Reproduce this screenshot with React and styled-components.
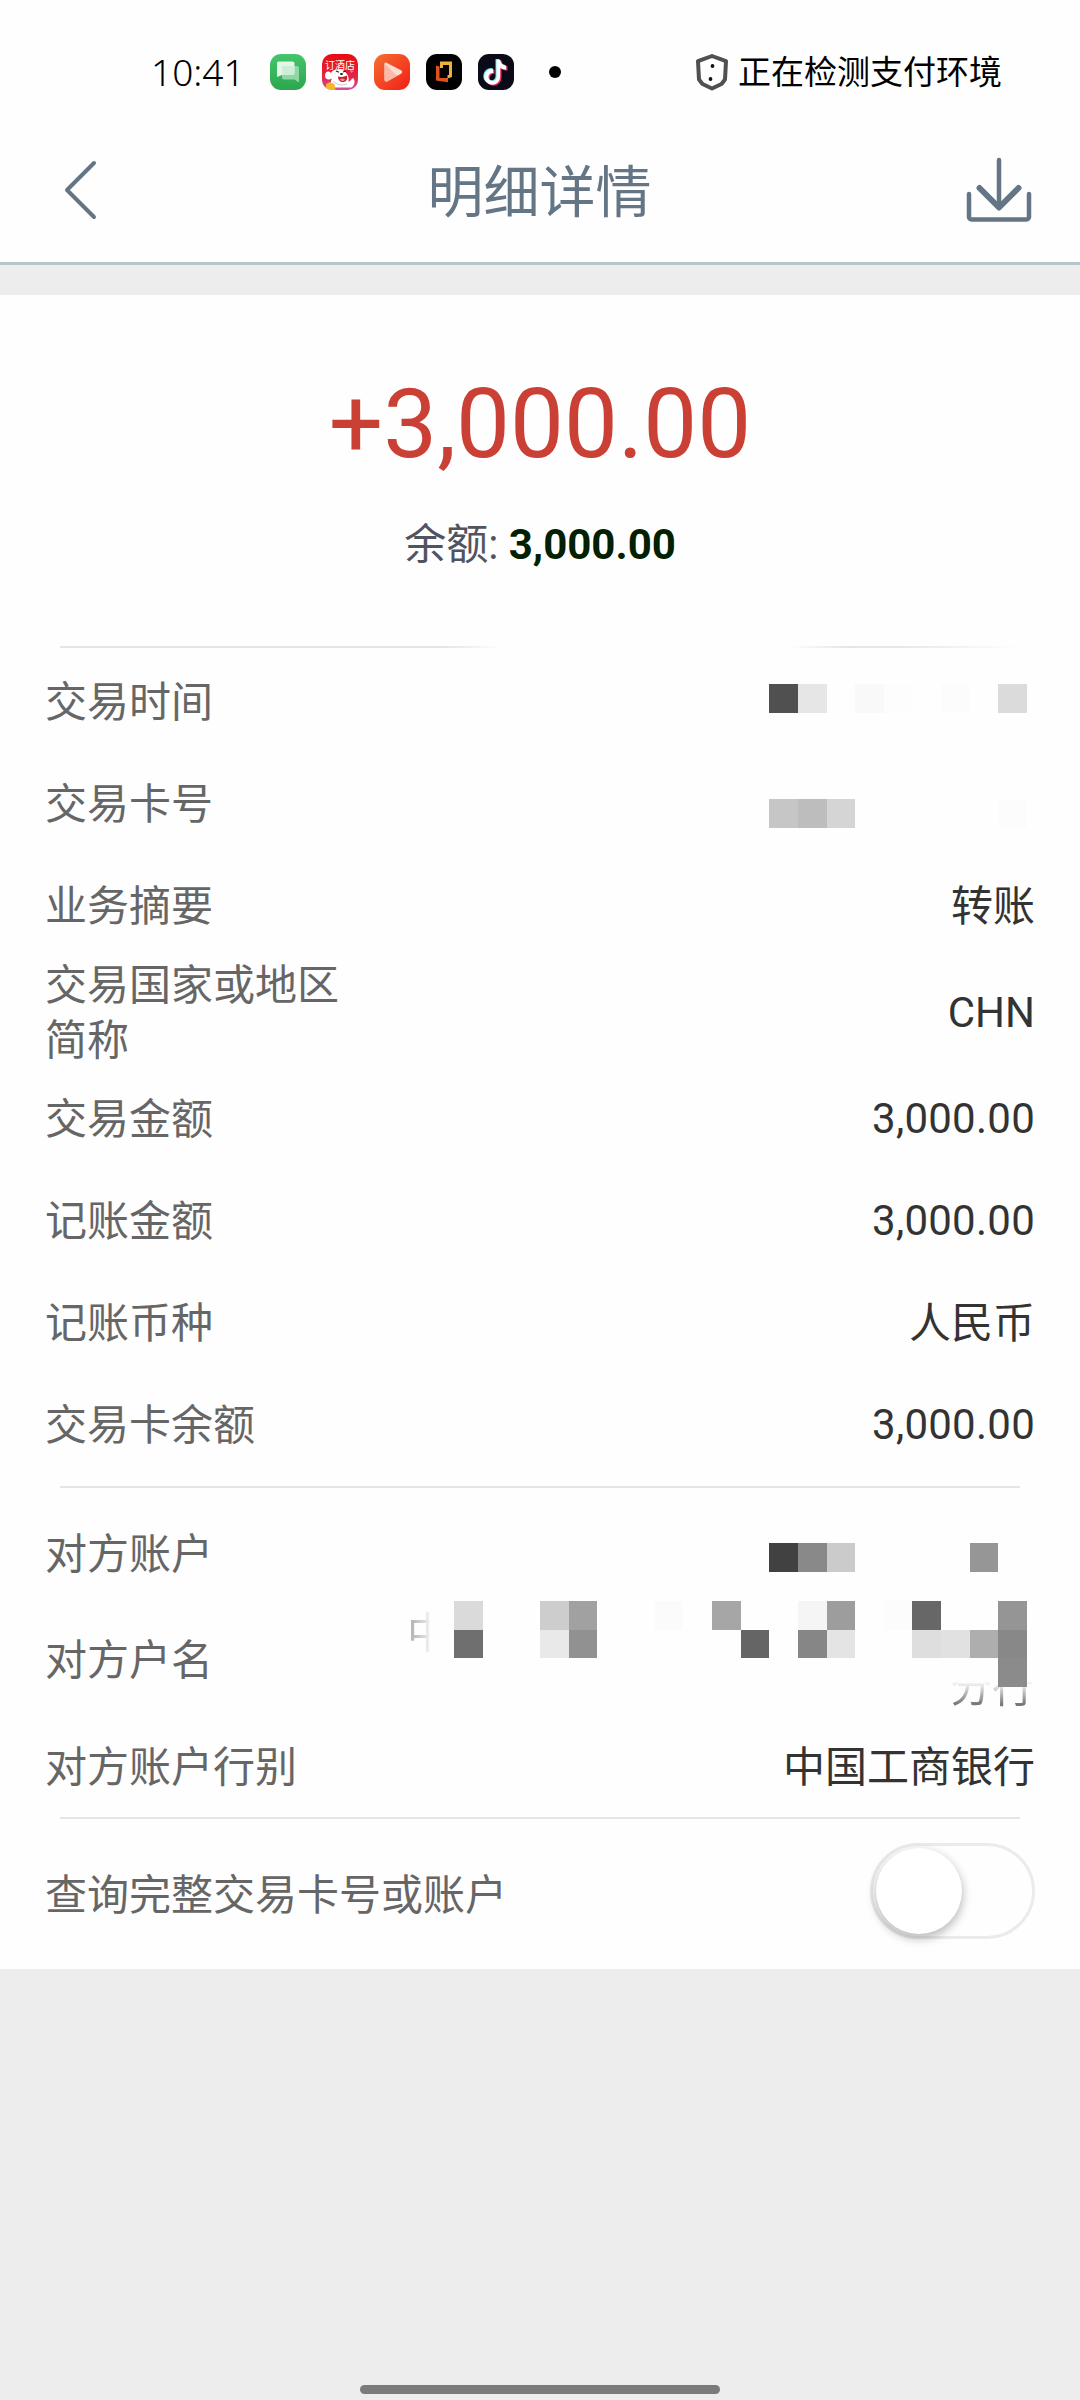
import React, { useState } from 'react'
import styled, { createGlobalStyle, css } from 'styled-components';

const GlobalStyle = createGlobalStyle`
  * {
    box-sizing: border-box;
  }
  body {
    margin: 0;
    background: #ededed;
    font-family: Roboto, "Noto Sans CJK SC", sans-serif;
  }
`;

const Page = styled.div`
  width: 1080px;
  height: 2400px;
  display: flex;
  flex-direction: column;
  background: #ededed;
  overflow: hidden;
`;

const StatusBar = styled.div`
  height: 120px;
  padding: 24px 78px 0 151px;
  display: flex;
  align-items: center;
  background: #fefefe;
  color: #000;
`;

const Time = styled.span`
  width: 119px;
  font-family: "Noto Sans", sans-serif;
  font-size: 37px;
  font-weight: 300;
  line-height: 48px;
  white-space: nowrap;
`;

const AppIcons = styled.div`
  display: flex;
  gap: 16px;
  svg {
    display: block;
  }
`;

const MoreDot = styled.span`
  width: 12px;
  height: 12px;
  margin-left: 35px;
  border-radius: 50%;
  background: #000;
`;

const Notice = styled.div`
  margin-left: auto;
  display: flex;
  align-items: center;
  gap: 9px;
  font-size: 33px;
  line-height: 48px;
  span {
    padding-top: 2px;
  }
`;

const NavBar = styled.header`
  height: 145px;
  padding: 0 48px 2px 63px;
  display: flex;
  align-items: center;
  justify-content: space-between;
  background: #fefefe;
  border-bottom: 3px solid #b8c6cc;
`;

const NavButton = styled.button`
  width: 66px;
  height: 66px;
  padding: 0;
  border: none;
  background: none;
  svg {
    display: block;
  }
`;

const Title = styled.h1`
  margin: 0;
  padding: 6px 16px 0 0;
  font-size: 56px;
  font-weight: 400;
  line-height: 80px;
  color: #647685;
`;

const Card = styled.main`
  height: 1674px;
  margin-top: 30px;
  background: #fefefe;
`;

const Summary = styled.div`
  height: 351px;
  padding-top: 73px;
  display: flex;
  flex-direction: column;
  align-items: center;
`;

const Amount = styled.div`
  font-size: 96px;
  line-height: 112px;
  color: #ca4035;
`;

const Balance = styled.div`
  margin-top: 35px;
  font-size: 42px;
  line-height: 60px;
  color: #50545e;
  b {
    color: #022002;
  }
`;

const Divider = styled.div`
  height: 2px;
  margin: 0 60px;
  background: #e5e5e5;
  ${(props) =>
    props.$worn &&
    css`
      background: linear-gradient(90deg, #e5e5e5 40%, #fefefe 46%, #fefefe 76%, #e5e5e5 82%, #e8e8e8 88%, #fefefe);
    `}
`;

const Rows = styled.div`
  padding: ${(props) => props.$pad || '0'};
`;

const Row = styled.div`
  position: relative;
  height: ${(props) => props.$height || 102}px;
  padding: 0 45px;
  display: flex;
  align-items: center;
  justify-content: space-between;
  font-size: 42px;
  line-height: 55px;
`;

const Label = styled.span`
  width: ${(props) => (props.$wide ? 'auto' : '300px')};
  padding-top: 2px;
  color: #666;
`;

const Value = styled.span`
  padding-top: ${(props) => (props.$numeric ? 0 : 2)}px;
  letter-spacing: ${(props) => (props.$numeric ? '0.25px' : 'normal')};
  color: #333;
  text-align: right;
`;

// pixelated cover laid over a private value
const Mosaic = styled.div`
  position: absolute;
  top: ${(props) => props.$top}px;
  right: 53px;
  display: grid;
  grid-template-columns: repeat(${(props) => props.$cols}, 28.65px);
  grid-auto-rows: 28.65px;
`;

const Cell = styled.i`
  background: ${(props) => props.$tone};
`;

const Remnant = styled.span`
  position: absolute;
  top: ${(props) => props.$top}px;
  left: ${(props) => props.$left}px;
  white-space: nowrap;
  color: transparent;
  background: ${(props) => props.$fade};
  background-clip: text;
  -webkit-background-clip: text;
`;

const Switch = styled.button`
  width: 165px;
  height: 96px;
  margin-bottom: 6px;
  padding: 1px 3px;
  display: flex;
  align-items: center;
  border: 3px solid #ebebeb;
  border-radius: 48px;
  background: #fefefe;
`;

const Knob = styled.span`
  width: 86px;
  height: 86px;
  border-radius: 50%;
  background: #fff;
  box-shadow: 0 4px 10px 1px rgba(0, 0, 0, 0.26);
  transform: translateX(${(props) => (props.$on ? 67 : 0)}px);
`;

const HomeBar = styled.div`
  width: 360px;
  height: 9px;
  margin: auto auto 6px;
  border-radius: 5px;
  background: #7b7b7b;
`;

const timeTones = [['#505050', '#e6e6e6', '', '#f9f9f9', '#fdfdfd', '', '#fcfcfc', '', '#dbdbdb']];
const cardTones = [['#c6c6c6', '#bdbdbd', '#d5d5d5', '', '', '', '', '', '#fcfcfc']];
const accountTones = [['#414141', '#898989', '#cbcbcb', '', '', '', '', '#969696', '']];
const nameTones = [
  ['#dadada', '', '', '#cdcdcd', '#a1a1a1', '', '', '#fbfbfb', '', '#a6a6a6', '', '', '#f5f5f5', '#9d9d9d', '', '#fcfcfc', '#676767', '', '', '#959595'],
  ['#6f6f6f', '', '', '#e9e9e9', '#919191', '', '', '', '', '', '#656565', '', '#868686', '#e4e4e4', '', '', '#dedede', '#e1e1e1', '#aeaeae', '#888888'],
  ['', '', '', '', '', '', '', '', '', '', '', '', '', '', '', '', '', '', '', '#8b8b8b'],
];

const details = [
  { label: '交易时间', tones: timeTones, top: 34 },
  { label: '交易卡号', tones: cardTones, top: 47 },
  { label: '业务摘要', value: '转账' },
  { label: '交易国家或地区简称', value: 'CHN', height: 111 },
  { label: '交易金额', value: '3,000.00', numeric: true },
  { label: '记账金额', value: '3,000.00', numeric: true },
  { label: '记账币种', value: '人民币' },
  { label: '交易卡余额', value: '3,000.00', numeric: true },
];

function Censored({ tones, top }) {
  return (
    <Mosaic $top={top} $cols={tones[0].length}>
      {tones.flat().map((tone, i) => <Cell key={i} $tone={tone || 'transparent'} />)}
    </Mosaic>
  )
}

function DetailRow({ item }) {
  return (
    <Row $height={item.height}>
      <Label>{item.label}</Label>
      {item.tones ? <Censored tones={item.tones} top={item.top} /> : <Value $numeric={item.numeric}>{item.value}</Value>}
    </Row>
  )
}

function ChatIcon() {
  return (
    <svg width="36" height="36" viewBox="0 0 36 36">
      <defs>
        <linearGradient id="chatBg" x1="0" y1="0" x2="0" y2="1">
          <stop offset="0" stopColor="#45c56c" />
          <stop offset="1" stopColor="#2ca650" />
        </linearGradient>
      </defs>
      <rect width="36" height="36" rx="11" fill="url(#chatBg)" />
      <path d="M14 12h13a2 2 0 0 1 2 2v14.5l-4.5-3H14a2 2 0 0 1-2-2V14z" fill="#8fd7a4" />
      <path d="M9.5 7.5h13a2 2 0 0 1 2 2v9.5a2 2 0 0 1-2 2H12l-5 2V9.500a2 2 0 0 1 2.500-2z" fill="#e4f6e9" />
      <path d="M12 12h12.500v7a2 2 0 0 1-2 2H12z" fill="#cdeed6" />
    </svg>
  )
}

function HotelIcon() {
  return (
    <svg width="36" height="36" viewBox="0 0 36 36">
      <defs>
        <linearGradient id="hotelBg" x1="0" y1="0" x2="0" y2="1">
          <stop offset="0" stopColor="#e60c12" />
          <stop offset="0.6" stopColor="#e3243f" />
          <stop offset="1" stopColor="#cf4fa0" />
        </linearGradient>
        <clipPath id="hotelClip"><rect width="36" height="36" rx="10" /></clipPath>
      </defs>
      <g clipPath="url(#hotelClip)">
        <rect width="36" height="36" fill="url(#hotelBg)" />
        <text x="3" y="14.500" fontSize="10" fill="#fff" fontFamily="Noto Sans CJK SC">订酒店</text>
        <path d="M3 22c0-4 3-6 6-3 1-2 3-3.500 6-3.500 5-.5 8 1 9.500 4 2 2 2.500 5 2 8 2 1 3-4 5-3 2 3 1 7-2 9H10c-2-4-1-7 0-9-3 2-7 1-7-2.500z" fill="#fff" />
        <path d="M16 22.500c4 1 6.500 0 9-1 1 4-1 6.500-4 6.500-3 0-5-2-5-5.500z" fill="#c81f2c" />
        <path d="M18 25c2-1 3.500-.500 5 .500-1.500 2.500-4 2-5-.5z" fill="#f58c8a" />
        <path d="M14 17l3 1.300M24 17l-3 1" stroke="#222" strokeWidth="1.200" />
        <ellipse cx="19.500" cy="20" rx="1.600" ry="1" fill="#222" />
        <path d="M11 27c4 4 8 5 14 3" stroke="#cfc4dc" strokeWidth="1" fill="none" />
        <path d="M4 30l4-2 4.500 2 1 6H4z" fill="#f5b62c" />
        <path d="M28 16l4 1-3 2z" fill="#d77ce0" />
      </g>
    </svg>
  )
}

function VideoIcon() {
  return (
    <svg width="36" height="36" viewBox="0 0 36 36">
      <defs>
        <linearGradient id="videoBg" x1="0" y1="0" x2="1" y2="1">
          <stop offset="0" stopColor="#f5702f" />
          <stop offset="1" stopColor="#f21e18" />
        </linearGradient>
      </defs>
      <rect width="36" height="36" rx="11" fill="url(#videoBg)" />
      <path d="M12 8.500l15.500 8a2 2 0 0 1 0 3L13 27.500a2 2 0 0 1-2.500-2V9.500a1.200 1.200 0 0 1 1.500-1z" fill="#fddcd2" />
      <path d="M10.500 9.500L23 21.700 13 27.500a2 2 0 0 1-2.500-2z" fill="#fbb9a8" />
    </svg>
  )
}

function BracketIcon() {
  return (
    <svg width="36" height="36" viewBox="0 0 36 36">
      <rect width="36" height="36" rx="11" fill="#000" />
      <path d="M10 11.500l3.500 1v11.500h8.500v4.300L10 26.500z" fill="#dd5220" />
      <path d="M14 7.500h12v15.500l-4.500 1.500v-3.200l1.500-.500V11h-6v3h-3z" fill="#eeb23c" />
    </svg>
  )
}

function NoteIcon() {
  const note = 'M19 6h3.700c.500 3.500 2.500 5.500 6 6v4c-2.300 0-4.300-.700-6-1.900V23a8 8 0 1 1-7-7.900v4.200A4 4 0 1 0 19 23z';
  return (
    <svg width="36" height="36" viewBox="0 0 36 36">
      <rect width="36" height="36" rx="11" fill="#0b0a18" />
      <path d={note} fill="#5ce6e8" transform="translate(-1.500 -1)" />
      <path d={note} fill="#e8305a" transform="translate(0.800 0.600)" />
      <path d={note} fill="#fff" transform="translate(-0.500 -0.300)" />
    </svg>
  )
}

function ShieldIcon() {
  return (
    <svg width="34" height="38" viewBox="0 0 34 38">
      <path d="M17 3L31 8.200 30 26.500 26.500 31 17 35.500 7.500 31 4 26.500 3 8.200z" fill="none" stroke="#505050" strokeWidth="4" strokeLinejoin="round" />
      <circle cx="17.500" cy="13" r="1.900" fill="#111" />
      <circle cx="15.500" cy="26" r="1.900" fill="#111" />
    </svg>
  )
}

function App() {
  const [showFull, setShowFull] = useState(false);
  return (
    <Page>
      <GlobalStyle />
      <StatusBar>
        <Time>10:41</Time>
        <AppIcons>
          <ChatIcon />
          <HotelIcon />
          <VideoIcon />
          <BracketIcon />
          <NoteIcon />
        </AppIcons>
        <MoreDot />
        <Notice>
          <ShieldIcon />
          <span>正在检测支付环境</span>
        </Notice>
      </StatusBar>
      <NavBar>
        <NavButton>
          <svg width="66" height="66" viewBox="0 0 66 66" fill="none" stroke="#647685" strokeWidth="4" strokeLinecap="round" strokeLinejoin="round">
            <path d="M31 6L4 33l27 27" />
          </svg>
        </NavButton>
        <Title>明细详情</Title>
        <NavButton>
          <svg width="66" height="66" viewBox="0 0 66 66" fill="none" stroke="#647685" strokeLinecap="round" strokeLinejoin="round">
            <path d="M33 3v48" strokeWidth="4.500" />
            <path d="M13.500 31L33 50.500 52.500 31" strokeWidth="6" />
            <path d="M3 37v23a2.500 2.500 0 0 0 2.500 2.500h55A2.500 2.500 0 0 0 63 60V37" strokeWidth="4.500" />
          </svg>
        </NavButton>
      </NavBar>
      <Card>
        <Summary>
          <Amount>+3,000.00</Amount>
          <Balance>余额: <b>3,000.00</b></Balance>
        </Summary>
        <Divider $worn />
        <Rows $pad="2px 0 11px">
          {details.map((item) => <DetailRow key={item.label} item={item} />)}
        </Rows>
        <Divider />
        <Rows $pad="14px 0 0">
          <Row>
            <Label>对方账户</Label>
            <Censored tones={accountTones} top={41} />
          </Row>
          <Row $height={111}>
            <Label>对方户名</Label>
            <Remnant $top={2} $left={407} $fade="linear-gradient(90deg, #aaa, #ddd 45%, transparent 56%)">中</Remnant>
            <Remnant $top={56} $left={950} $fade="linear-gradient(180deg, transparent 38%, #ddd 50%, #777 80%)">分行</Remnant>
            <Censored tones={nameTones} top={-3} />
          </Row>
          <Row>
            <Label>对方账户行别</Label>
            <Value>中国工商银行</Value>
          </Row>
        </Rows>
        <Divider />
        <Row $height={150}>
          <Label $wide>查询完整交易卡号或账户</Label>
          <Switch onClick={() => setShowFull(!showFull)}>
            <Knob $on={showFull} />
          </Switch>
        </Row>
      </Card>
      <HomeBar />
    </Page>
  )
}

export default App
